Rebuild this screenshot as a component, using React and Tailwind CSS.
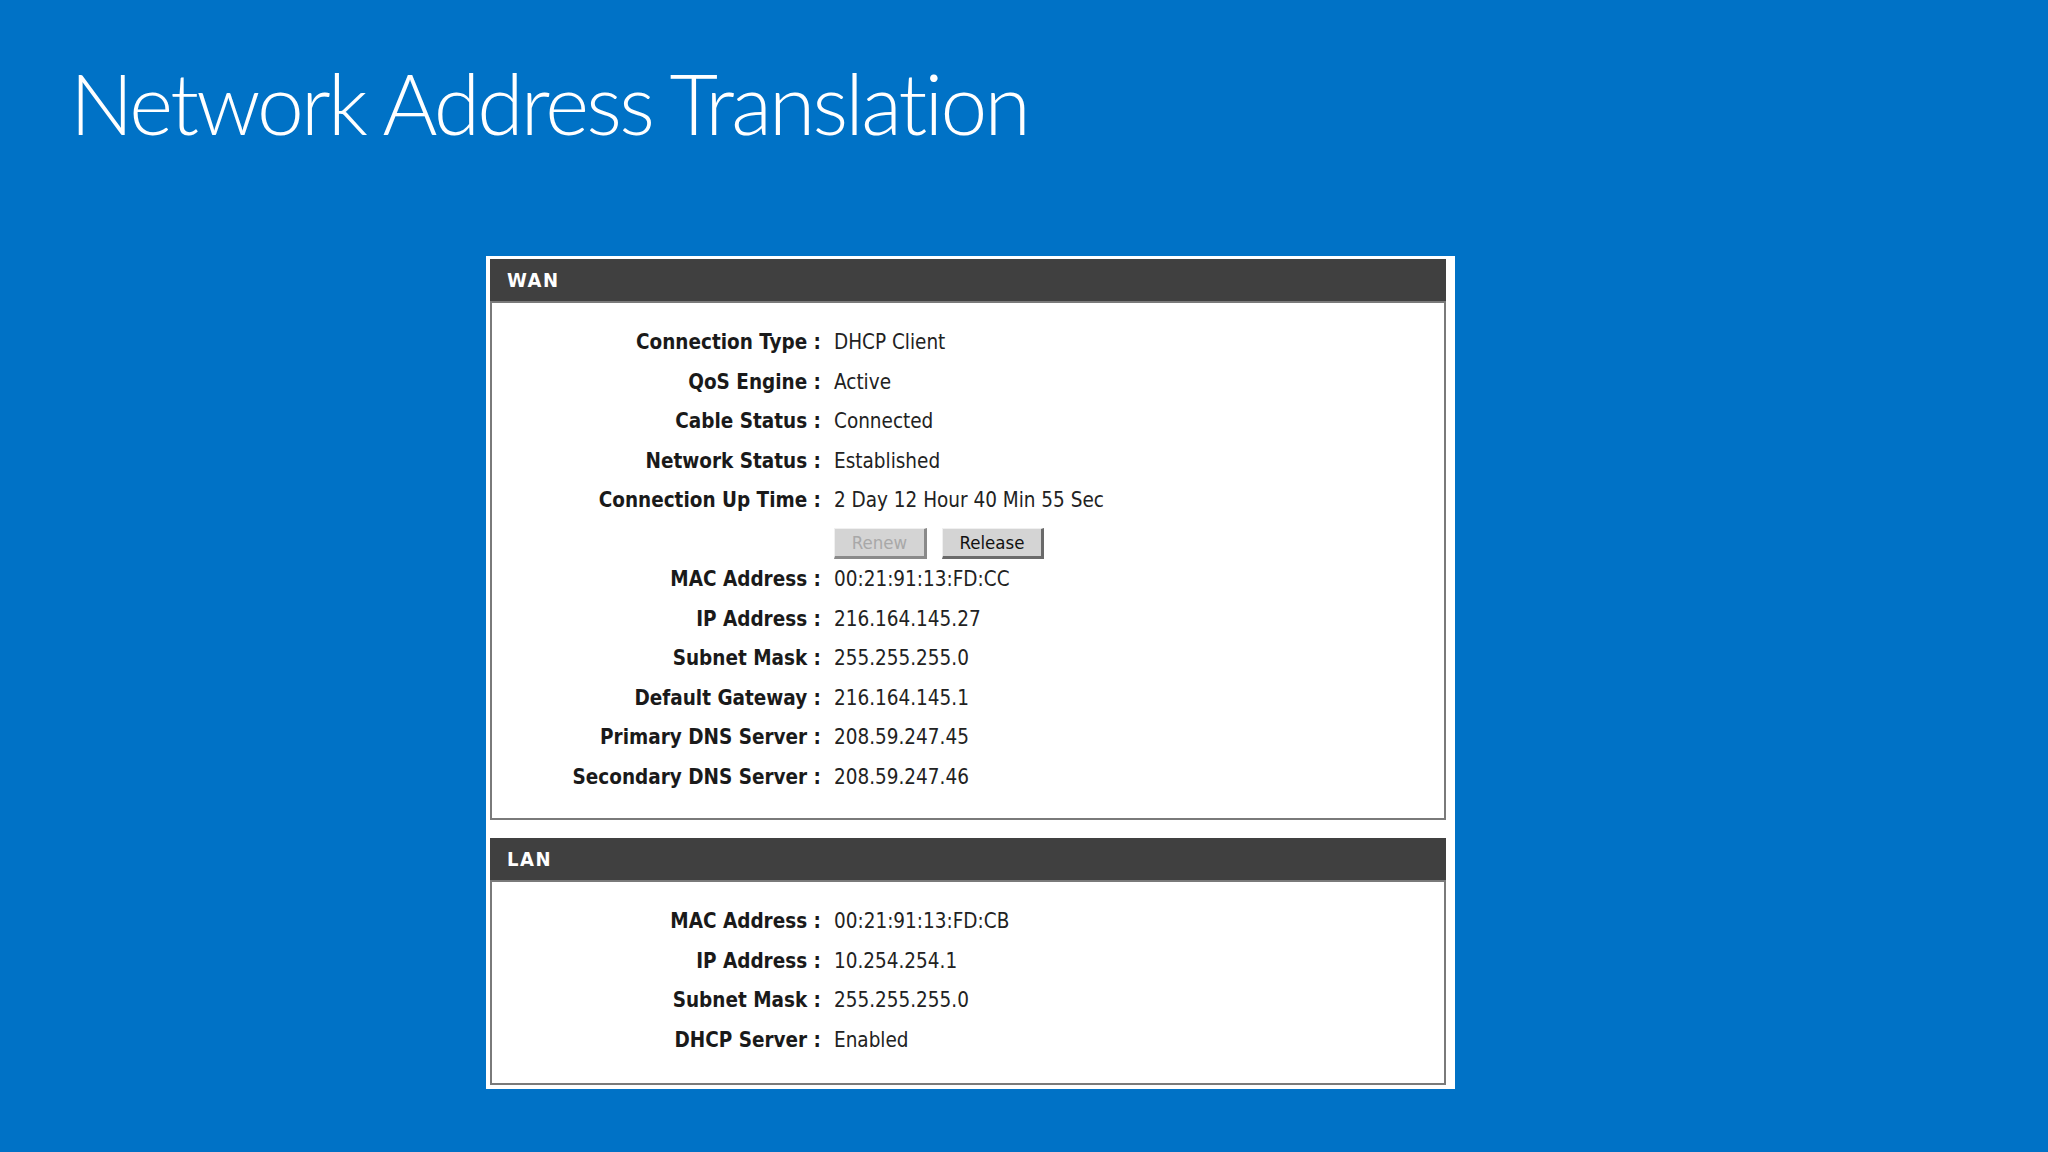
import React from "react";

const wanRows = [
  ["Connection Type", "DHCP Client"],
  ["QoS Engine", "Active"],
  ["Cable Status", "Connected"],
  ["Network Status", "Established"],
  ["Connection Up Time", "2 Day 12 Hour 40 Min 55 Sec"],
  ["__buttons__", ""],
  ["MAC Address", "00:21:91:13:FD:CC"],
  ["IP Address", "216.164.145.27"],
  ["Subnet Mask", "255.255.255.0"],
  ["Default Gateway", "216.164.145.1"],
  ["Primary DNS Server", "208.59.247.45"],
  ["Secondary DNS Server", "208.59.247.46"],
];

const lanRows = [
  ["MAC Address", "00:21:91:13:FD:CB"],
  ["IP Address", "10.254.254.1"],
  ["Subnet Mask", "255.255.255.0"],
  ["DHCP Server", "Enabled"],
];

const Row = ({ label, value }) => {
  if (label === "__buttons__") {
    return (
      <div className="grid grid-cols-[329px_1fr] h-[39.5px] items-center pt-[6px]">
        <div />
        <div className="flex gap-[15px] pl-[13px]">
          <button className="w-[93px] h-[31px] bg-[#d4d4d4] border-t border-l border-t-[#f0f0f0] border-l-[#f0f0f0] border-b-[3px] border-r-[3px] border-b-[#8a8a8a] border-r-[#8a8a8a] text-[18.5px] text-[#a8a8a8]">
            Renew
          </button>
          <button className="w-[102px] h-[31px] bg-[#d4d4d4] border-t border-l border-t-[#f0f0f0] border-l-[#f0f0f0] border-b-[3px] border-r-[3px] border-b-[#6a6a6a] border-r-[#6a6a6a] text-[18.5px] text-[#111]">
            Release
          </button>
        </div>
      </div>
    );
  }
  return (
    <div className="grid grid-cols-[329px_1fr] h-[39.5px] items-center">
      <div className="text-right font-bold text-[#1a1a1a] whitespace-nowrap">{label} :</div>
      <div className="pl-[13px] text-[#222] whitespace-nowrap">{value}</div>
    </div>
  );
};

const Section = ({ title, rows, className, bodyClass }) => (
  <div className={className}>
    <div className="h-[44px] bg-[#404040] border-b-2 border-b-[#7a7a7a] flex items-center pl-[17px]">
      <span className="text-white font-bold text-[20px] tracking-[1.5px]">{title}</span>
    </div>
    <div className={"border-x-2 border-b-2 border-[#7a7a7a] " + bodyClass}>
      {rows.map(([label, value], i) => (
        <Row key={i} label={label} value={value} />
      ))}
    </div>
  </div>
);

export default function App() {
  return (
    <div className="w-[2048px] h-[1152px] bg-[#0072c6] overflow-hidden">
      <h1
        className="pl-[70px] pt-[61px] text-[84px] leading-[84px] font-light text-white tracking-[-2.8px]"
        style={{ fontFamily: 'Lato, "Open Sans", sans-serif' }}
      >
        Network Address Translation
      </h1>
      <div
        className="ml-[486px] mt-[111px] w-[969px] bg-white pt-[3px] pl-[4px] pr-[9px] pb-[4px] text-[20.5px]"
        style={{ fontFamily: '"DejaVu Sans Condensed", "DejaVu Sans", sans-serif', fontStretch: "condensed" }}
      >
        <Section title="WAN" rows={wanRows} bodyClass="pt-[20px] pb-[21px]" />
        <Section title="LAN" rows={lanRows} className="mt-[18px]" bodyClass="pt-[20px] pb-[23px]" />
      </div>
    </div>
  );
}
